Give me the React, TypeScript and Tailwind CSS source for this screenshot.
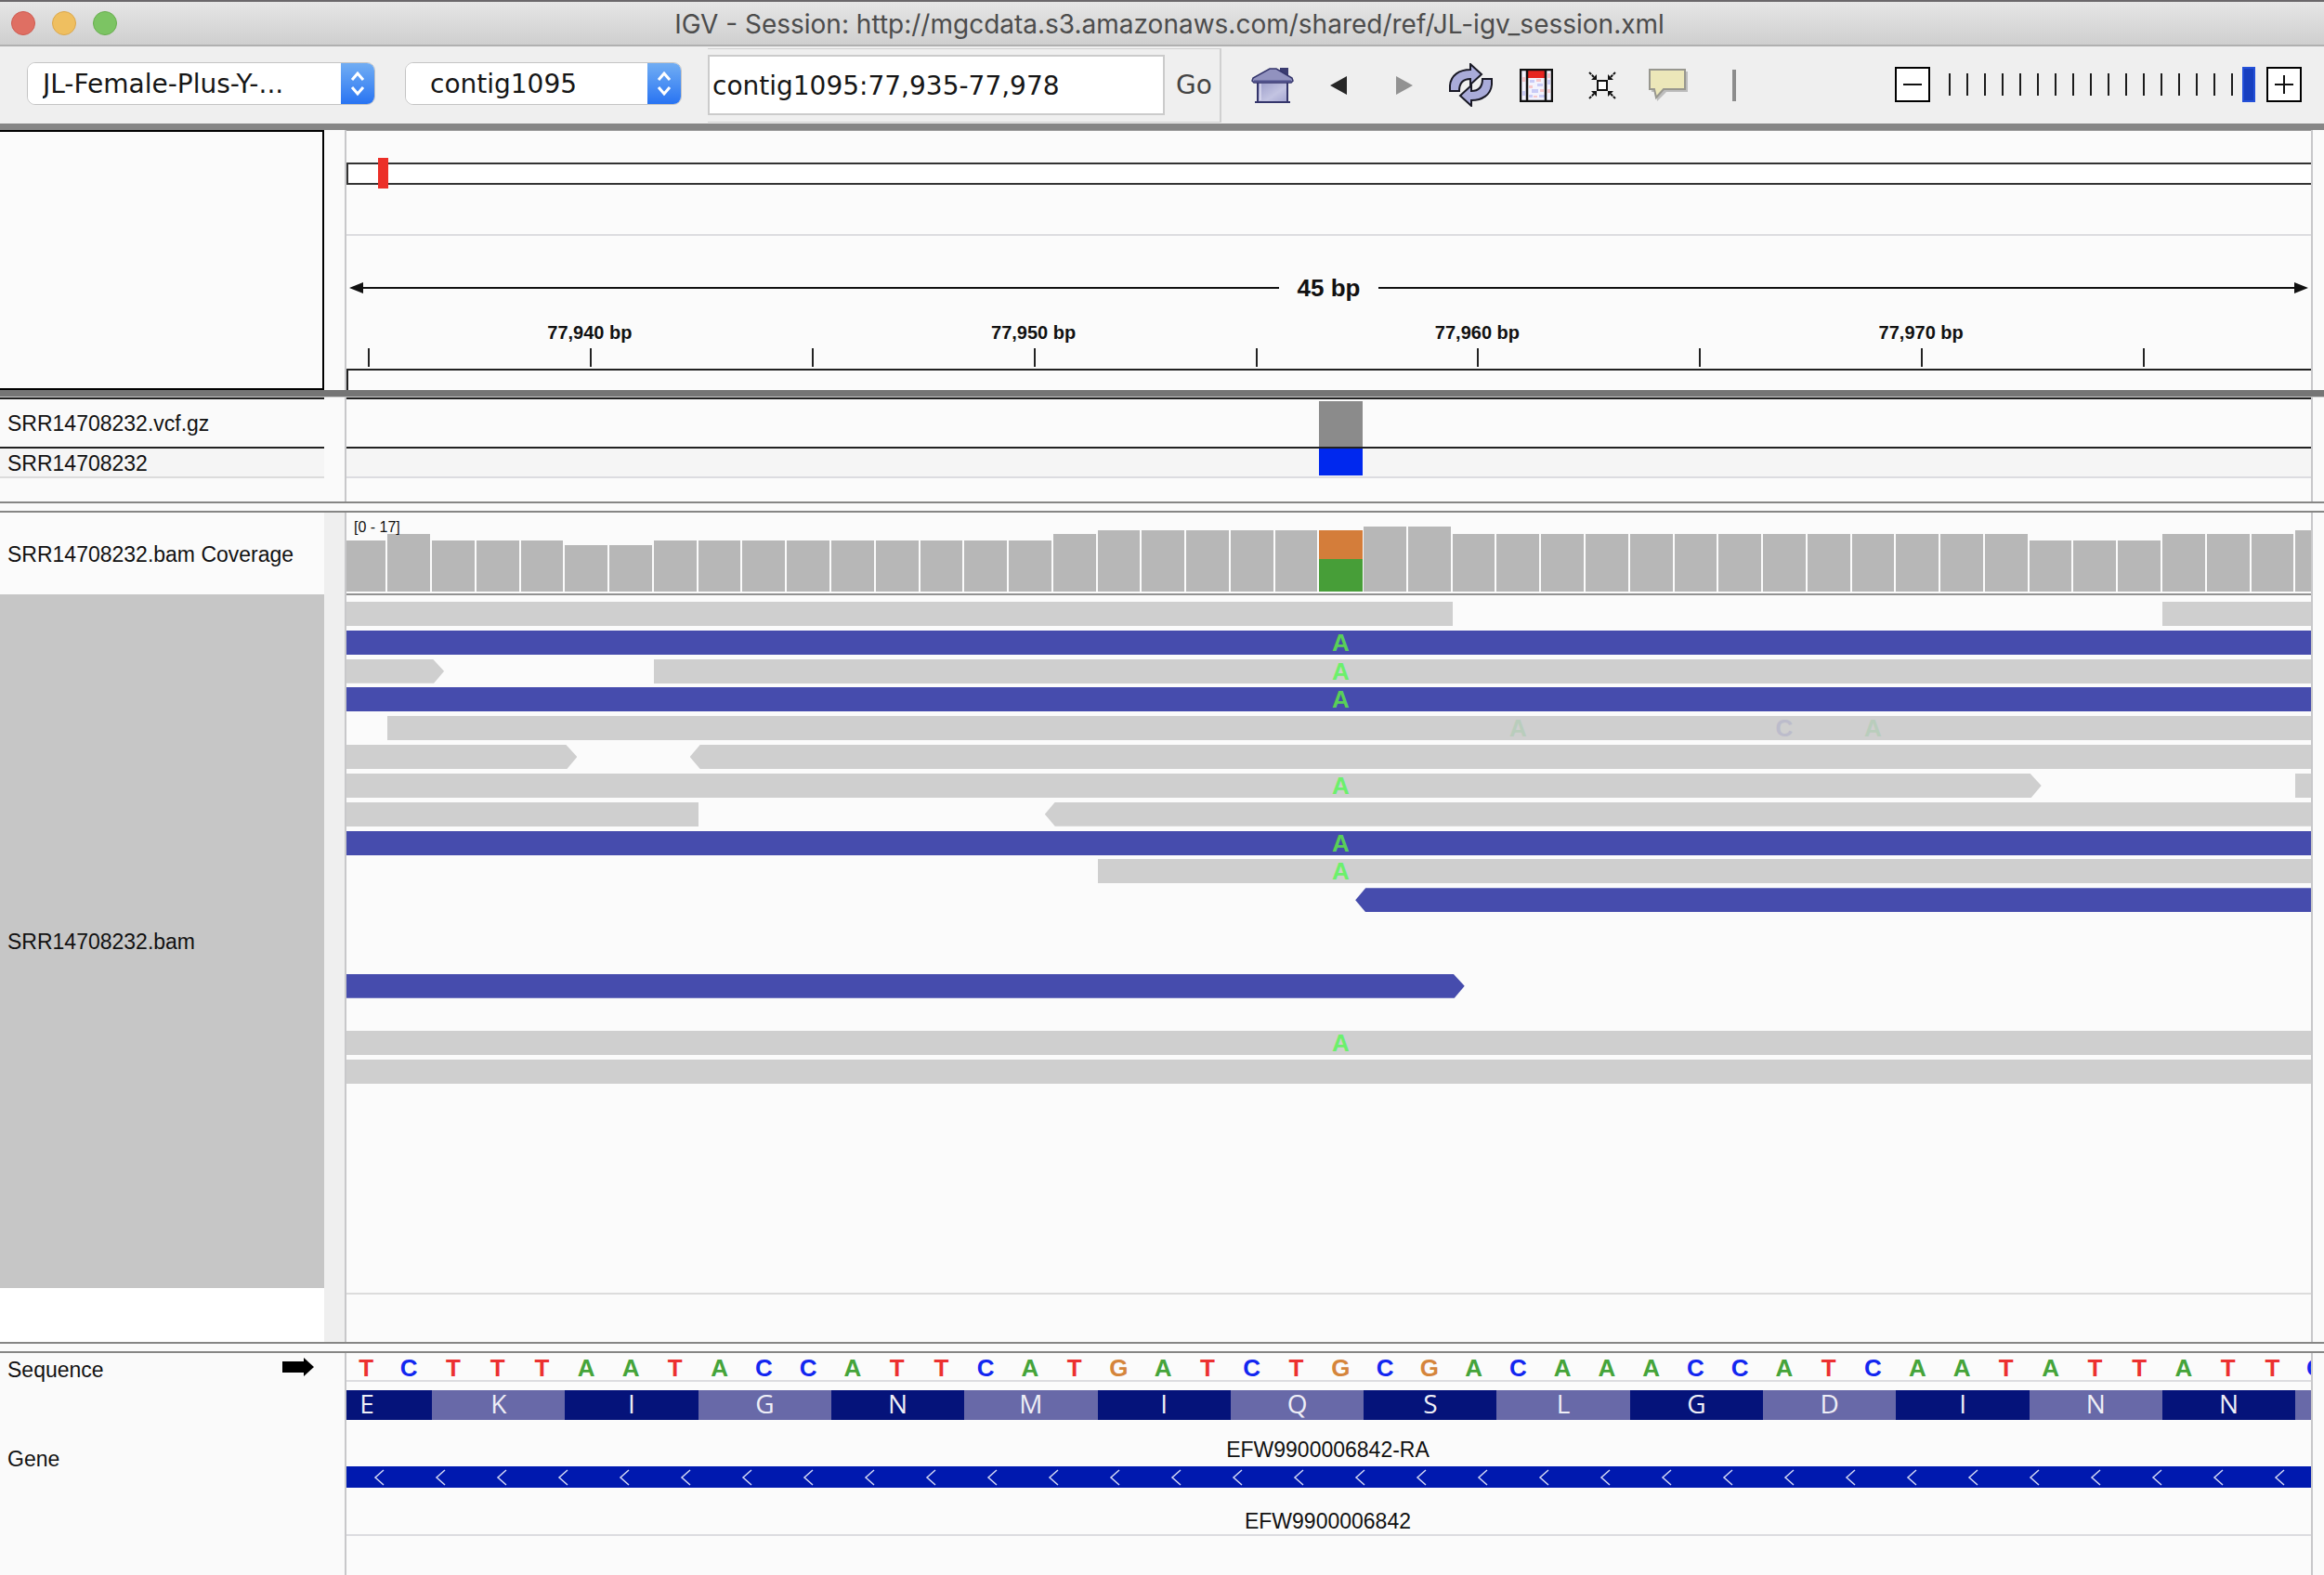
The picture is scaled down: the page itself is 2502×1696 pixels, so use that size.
import type { ReactNode } from 'react'
import clsx from 'clsx'

const SEQUENCE = 'TCTTTAATACCATTCATGATCTGCGACAAACCATCAATATTATTC'

// pixel height of the coverage bar under each base
const COVERAGE = [
  55, 62, 55, 55, 55, 50, 50, 55, 55, 55, 55, 55, 55, 55, 55, 55, 62, 66, 66, 66, 66, 66, 66, 70, 70,
  62, 62, 62, 62, 62, 62, 62, 62, 62, 62, 62, 62, 62, 55, 55, 55, 62, 62, 62, 66,
]

const VARIANT = 22

const BASE_COLORS: Record<string, string> = {
  A: 'text-[#45a43a]',
  C: 'text-[#1226f0]',
  G: 'text-[#d5853b]',
  T: 'text-[#ec3030]',
}

const AMINO_ACIDS = [
  { letter: 'E', span: 'col-[1/3]' },
  { letter: 'K', span: 'col-[3/6]' },
  { letter: 'I', span: 'col-[6/9]' },
  { letter: 'G', span: 'col-[9/12]' },
  { letter: 'N', span: 'col-[12/15]' },
  { letter: 'M', span: 'col-[15/18]' },
  { letter: 'I', span: 'col-[18/21]' },
  { letter: 'Q', span: 'col-[21/24]' },
  { letter: 'S', span: 'col-[24/27]' },
  { letter: 'L', span: 'col-[27/30]' },
  { letter: 'G', span: 'col-[30/33]' },
  { letter: 'D', span: 'col-[33/36]' },
  { letter: 'I', span: 'col-[36/39]' },
  { letter: 'N', span: 'col-[39/42]' },
  { letter: 'N', span: 'col-[42/45]' },
  { letter: '', span: 'col-[45/46]' },
]

type Read = { span: string; blue?: boolean; arrow?: 'left' | 'right' }
type Mismatch = { base: string; at: string; faint?: boolean }
type ReadRow = { reads: Read[]; mismatches?: Mismatch[] }

const SNP: Mismatch = { base: 'A', at: 'col-[23]' }

const READ_ROWS: ReadRow[] = [
  { reads: [{ span: 'col-[1/26]' }, { span: 'col-[42/46]' }] },
  { reads: [{ span: 'col-[1/46]', blue: true }], mismatches: [SNP] },
  { reads: [{ span: 'col-[1/3]', arrow: 'right' }, { span: 'col-[8/46]' }], mismatches: [SNP] },
  { reads: [{ span: 'col-[1/46]', blue: true }], mismatches: [SNP] },
  {
    reads: [{ span: 'col-[2/46]' }],
    mismatches: [
      { base: 'A', at: 'col-[27]', faint: true },
      { base: 'C', at: 'col-[33]', faint: true },
      { base: 'A', at: 'col-[35]', faint: true },
    ],
  },
  { reads: [{ span: 'col-[1/6]', arrow: 'right' }, { span: 'col-[9/46]', arrow: 'left' }] },
  { reads: [{ span: 'col-[1/39]', arrow: 'right' }, { span: 'col-[45/46]' }], mismatches: [SNP] },
  { reads: [{ span: 'col-[1/9]' }, { span: 'col-[17/46]', arrow: 'left' }] },
  { reads: [{ span: 'col-[1/46]', blue: true }], mismatches: [SNP] },
  { reads: [{ span: 'col-[18/46]' }], mismatches: [SNP] },
  { reads: [{ span: 'col-[24/46]', blue: true, arrow: 'left' }] },
  { reads: [] },
  { reads: [] },
  { reads: [{ span: 'col-[1/26]', blue: true, arrow: 'right' }] },
  { reads: [] },
  { reads: [{ span: 'col-[1/46]' }], mismatches: [SNP] },
  { reads: [{ span: 'col-[1/46]' }] },
]

const TICKS = ['', '77,940 bp', '', '77,950 bp', '', '77,960 bp', '', '77,970 bp', '']

// One column per base, the first and the last are cut off by the panel edges
function BaseGrid({ className, children }: { className?: string; children: ReactNode }) {
  return (
    <div
      className={clsx(
        'grid grid-cols-[minmax(0,4430fr)_repeat(43,minmax(0,4775fr))_minmax(0,1670fr)]',
        className,
      )}
    >
      {children}
    </div>
  )
}

function Panel({
  names,
  children,
  gutter = 'bg-[#fafafa]',
  className,
}: {
  names: ReactNode
  children: ReactNode
  gutter?: string
  className?: string
}) {
  return (
    <section className={clsx('flex', className)}>
      <div className="flex w-[349px] shrink-0 flex-col">{names}</div>
      <div className={clsx('w-[22px] shrink-0', gutter)} />
      <div className="flex min-w-0 flex-1 flex-col overflow-hidden border-x-2 border-[#c8c8ca] bg-[#fbfbfb]">
        {children}
      </div>
      <div className="w-3 shrink-0 bg-[#fafafa]" />
    </section>
  )
}

function Divider() {
  return <div className="h-3 border-y-2 border-[#868685] bg-[#fafafa]" />
}

function Dropdown({ label, value, className }: { label: string; value: string; className: string }) {
  return (
    <div className="flex h-[46px] overflow-hidden rounded-[9px] border border-[#c4c4c4] bg-white">
      <select
        aria-label={label}
        className={clsx('h-full appearance-none bg-white pt-0.5 text-[28px] text-[#161616] outline-none', className)}
      >
        <option>{value}</option>
      </select>
      <div className="flex w-9 items-center justify-center bg-linear-to-b from-[#71adf3] to-[#2873f2]">
        <svg className="h-7 w-4" viewBox="0 0 16 28" fill="none" stroke="white" strokeWidth="3">
          <path d="M2 10 8 3l6 7M2 18l6 7 6-7" />
        </svg>
      </div>
    </div>
  )
}

function ToolButton({ label, children }: { label: string; children: ReactNode }) {
  return (
    <button type="button" aria-label={label} className="flex h-14 w-[71px] shrink-0 items-center justify-center">
      {children}
    </button>
  )
}

function HomeIcon() {
  return (
    <svg className="h-[38px] w-[46px]" viewBox="0 0 46 38">
      <defs>
        <linearGradient id="wall" x1="0" y1="0" x2="1" y2="1">
          <stop offset="0" stopColor="#9a9bc8" />
          <stop offset="0.6" stopColor="#c3c4e2" />
          <stop offset="1" stopColor="#a3a4d0" />
        </linearGradient>
      </defs>
      <path d="M31 0h9v11h-9z" fill="#3b3c70" />
      <path d="M7 15h32v22H7z" fill="url(#wall)" stroke="#34356b" strokeWidth="2" />
      <path d="M10 17v18" stroke="#dcdcf0" strokeWidth="1.5" />
      <path d="M20 1h7l17 10 1 3-2 2H3l-2-2 1-3z" fill="#9192bf" stroke="#34356b" strokeWidth="1.5" />
      <path d="M3 14.5h40" stroke="#50518c" strokeWidth="2" />
      <path d="M4 37h38" stroke="#34356b" strokeWidth="2" />
    </svg>
  )
}

function RefreshIcon() {
  const arrow = 'M1 30v-6C2 13 11 7 23 7V1l12 11-12 11v-6c-8 0-12 4-12 13z'
  return (
    <svg className="h-[47px] w-[47px]" viewBox="0 0 47 47" fill="#a9abd9" stroke="#191925" strokeWidth="2">
      <path d={arrow} />
      <path d={arrow} transform="rotate(180 23.5 23.5)" />
    </svg>
  )
}

function RegionIcon() {
  return (
    <svg className="h-9 w-9" viewBox="0 0 36 36">
      <path d="M1 1h34v34H1z" fill="#f3f3fd" />
      <path d="M11 12h5v3h-5zM19 16h6v3h-6zM13 22h7v4h-7zM21 28h6v3h-6zM10 28h4v3h-4zM3 24h3v5H3zM30 12h3v5h-3z" fill="#c9cbf6" />
      <path d="M18 11h5v3h-5zM10 18h4v3h-4zM22 22h4v3h-4zM15 29h4v2h-4zM3 9h3v5H3zM30 5h3v5h-3zM30 22h3v4h-3z" fill="#f7c6ca" />
      <path d="M9 2h18v8H9z" fill="#e8251f" />
      <path d="M1 1h34v34H1zM8 1v34M28 1v34" fill="none" stroke="#101010" strokeWidth="2.5" />
    </svg>
  )
}

function FitIcon() {
  return (
    <svg className="h-[30px] w-[30px]" viewBox="0 0 30 30" fill="none" stroke="#101010">
      <path d="M10 10h10v10H10z" fill="white" strokeWidth="2" />
      <path d="m1 1 5 5M29 1l-5 5M1 29l5-5M29 29l-5-5" strokeWidth="2" strokeDasharray="3 1" />
      <path d="M9 9H3l6-6zM21 9h6l-6-6zM9 21H3l6 6zM21 21h6l-6 6z" fill="#101010" stroke="none" />
    </svg>
  )
}

function NoteIcon() {
  return (
    <svg className="h-9 w-[43px]" viewBox="0 0 43 36">
      <path d="M3 3h39v22H19L9 35 8 25H3z" fill="#bdbdbd" />
      <path d="M1 1h38v21H16L8 31 6 22H1z" fill="#ece7b9" stroke="#98978f" strokeWidth="2" />
    </svg>
  )
}

function Toolbar() {
  return (
    <div className="flex h-[83px] items-center bg-[#efefef] font-['DejaVu_Sans',sans-serif] text-[28px]">
      <div className="flex items-center gap-8 pr-7 pb-1 pl-[29px]">
        <Dropdown label="Genome" value="JL-Female-Plus-Y-..." className="w-[337px] pl-4" />
        <Dropdown label="Chromosome" value="contig1095" className="w-[260px] pl-[26px]" />
      </div>
      <div className="flex h-20 items-center border-y border-r-2 border-[#d0d0d0] pr-2">
        <input
          aria-label="Locus"
          defaultValue="contig1095:77,935-77,978"
          className="h-[65px] w-[492px] border-2 border-[#cbcbcb] bg-white pt-0.5 pl-[3px] text-[#161616] outline-none"
        />
        <button type="button" className="pl-3 text-[#444]">
          Go
        </button>
      </div>
      <div className="flex items-center pl-5">
        <ToolButton label="Home">
          <HomeIcon />
        </ToolButton>
        <ToolButton label="Back">
          <svg className="h-5 w-[18px]" viewBox="0 0 18 20">
            <path d="M18 0v20L0 10z" fill="#262626" />
          </svg>
        </ToolButton>
        <ToolButton label="Forward">
          <svg className="h-5 w-[18px]" viewBox="0 0 18 20">
            <path d="M0 0v20l18-10z" fill="#929292" />
          </svg>
        </ToolButton>
        <ToolButton label="Refresh">
          <RefreshIcon />
        </ToolButton>
        <ToolButton label="Region of interest">
          <RegionIcon />
        </ToolButton>
        <ToolButton label="Fit to window">
          <FitIcon />
        </ToolButton>
        <ToolButton label="Popup text">
          <NoteIcon />
        </ToolButton>
        <ToolButton label="Ruler line">
          <span className="h-[34px] w-1 bg-[#8c8c8c]" />
        </ToolButton>
      </div>
      <ZoomControl />
    </div>
  )
}

function ZoomControl() {
  return (
    <div className="ml-auto flex items-center pr-6 pb-0.5">
      <button type="button" aria-label="Zoom out" className="h-[38px] w-[38px] border-2 border-black bg-white">
        <svg viewBox="0 0 34 34" stroke="#111" strokeWidth="2">
          <path d="M7 17h20" />
        </svg>
      </button>
      <div className="ml-5 grid w-[330px] items-center">
        <div className="col-start-1 row-start-1 mr-6 flex justify-between">
          {Array.from({ length: 17 }, (_, i) => (
            <span key={i} className="h-6 w-[2px] bg-[#1c1c1c]" />
          ))}
        </div>
        <input
          type="range"
          aria-label="Zoom level"
          min={0}
          max={17}
          defaultValue={17}
          className="col-start-1 row-start-1 h-[38px] w-full appearance-none bg-transparent [&::-webkit-slider-thumb]:h-[38px] [&::-webkit-slider-thumb]:w-[14px] [&::-webkit-slider-thumb]:appearance-none [&::-webkit-slider-thumb]:border-2 [&::-webkit-slider-thumb]:border-[#2450d8] [&::-webkit-slider-thumb]:bg-[#173fc0]"
        />
      </div>
      <button type="button" aria-label="Zoom in" className="ml-3 h-[38px] w-[38px] border-2 border-black bg-white">
        <svg viewBox="0 0 34 34" stroke="#111" strokeWidth="2">
          <path d="M7 17h20M17 7v20" />
        </svg>
      </button>
    </div>
  )
}

function Ruler() {
  return (
    <>
      <div className="flex h-[114px] flex-col border-t border-b-2 border-t-[#9a9a9a] border-b-[#dcdce0] pt-[34px]">
        <div className="relative h-6 border-y-2 border-l-2 border-[#333] bg-white">
          <div className="absolute -top-[7px] left-[1.5%] h-[33px] w-[11px] bg-[#ec2f28]" />
        </div>
      </div>
      <div className="mt-10 flex h-8 items-center px-[3px]">
        <svg className="h-3 w-5" viewBox="0 0 20 12">
          <path d="M0 6 15 0v5h5v2h-5v5z" fill="#111" />
        </svg>
        <div className="h-[2px] flex-1 bg-[#111]" />
        <span className="px-5 text-[26px] leading-8 font-bold">45 bp</span>
        <div className="h-[2px] flex-1 bg-[#111]" />
        <svg className="h-3 w-5" viewBox="0 0 20 12">
          <path d="M20 6 5 0v5H0v2h5v5z" fill="#111" />
        </svg>
      </div>
      <div className="mt-5 grid grid-cols-[minmax(0,23fr)_repeat(8,minmax(0,239fr))_minmax(0,181fr)]">
        <span />
        {TICKS.map((label, i) => (
          <div key={i}>
            <div className="h-6 w-fit -translate-x-1/2 text-xl leading-6 font-bold whitespace-nowrap">{label}</div>
            <div className="mt-[5px] h-5 w-[2px] bg-[#222]" />
          </div>
        ))}
      </div>
      <div className="mt-0.5 h-[23px] border-t-2 border-l-2 border-[#222]" />
    </>
  )
}

function Coverage() {
  return (
    <div className="relative border-b-2 border-[#929292]">
      <BaseGrid className="h-[87px] items-end pb-0.5">
        {COVERAGE.map((h, i) =>
          i === VARIANT ? (
            <div key={i} className="mr-px">
              <div className="h-[31px] bg-[#d47d3a]" />
              <div className="h-[35px] bg-[#479e38]" />
            </div>
          ) : (
            <div
              key={i}
              className={clsx('bg-[#b7b7b7]', i < COVERAGE.length - 1 && 'mr-0.5')}
              style={{ height: h }}
            />
          ),
        )}
      </BaseGrid>
      <span className="absolute top-2 left-2 text-base leading-4">[0 - 17]</span>
    </div>
  )
}

function Alignments() {
  return (
    <div className="h-[753px] border-b-2 border-[#dcdcdc] pt-[7px]">
      <div className="grid h-[524px] grid-rows-[repeat(17,minmax(0,1fr))]">
        {READ_ROWS.map((row, i) => (
          <BaseGrid key={i} className="items-start">
            {row.reads.map((read) => (
              <div
                key={read.span}
                className={clsx(
                  'row-start-1 h-[26px]',
                  read.span,
                  read.blue ? 'bg-[#464cad]' : 'bg-[#cfcfcf]',
                  read.arrow === 'right' &&
                    '-mr-[13px] [clip-path:polygon(0_0,calc(100%-12px)_0,100%_50%,calc(100%-11px)_100%,0_100%)]',
                  read.arrow === 'left' && '-ml-[9px] [clip-path:polygon(11px_0,100%_0,100%_100%,11px_100%,0_50%)]',
                )}
              />
            ))}
            {/* z-10 keeps the letters above the clipped reads */}
            {row.mismatches?.map((m) => (
              <span
                key={m.at}
                className={clsx(
                  'z-10 row-start-1 pr-0.5 text-center text-[26px] leading-[26px] font-bold',
                  m.at,
                  m.faint
                    ? m.base === 'A'
                      ? 'text-[#b9cdbc]'
                      : 'text-[#bcbccb]'
                    : row.reads[0].blue
                      ? 'text-[#59cf58]'
                      : 'text-[#6cf06c]',
                )}
              >
                {m.base}
              </span>
            ))}
          </BaseGrid>
        ))}
      </div>
    </div>
  )
}

function Gene() {
  return (
    <div className="flex h-[125px] flex-col border-b-2 border-[#dcdce0] text-center text-[23px] leading-6">
      <div className="pt-5 pr-0.5 pb-1.5">EFW9900006842-RA</div>
      <svg className="h-[23px] w-full shrink-0 bg-[#0019af]">
        <pattern id="strand" width="66" height="23" patternUnits="userSpaceOnUse">
          <path d="m40 4-9 8 9 8" fill="none" stroke="#d5d9f5" strokeWidth="1.5" />
        </pattern>
        <rect width="100%" height="100%" fill="url(#strand)" />
      </svg>
      <div className="pt-6 pr-0.5">EFW9900006842</div>
    </div>
  )
}

export default function App() {
  return (
    <div className="flex min-h-screen flex-col bg-[#fafafa] font-['Liberation_Sans',Arial,sans-serif] text-[#111]">
      <header className="flex h-[50px] items-center border-t-2 border-b-2 border-t-[#6b686b] border-b-[#b0b0b0] bg-linear-to-b from-[#e6e6e6] to-[#cfcfcf] px-3">
        <div className="flex flex-1 gap-[18px]">
          <span className="h-[26px] w-[26px] rounded-full border border-[#cf5a50] bg-[#df6f63]" />
          <span className="h-[26px] w-[26px] rounded-full border border-[#dba74b] bg-[#efbf60]" />
          <span className="h-[26px] w-[26px] rounded-full border border-[#68ae4e] bg-[#7cc463]" />
        </div>
        <h1 className="pt-0.5 pl-4 font-[Inter,sans-serif] text-[28px] whitespace-nowrap text-[#4c4c4c]">
          IGV - Session: http://mgcdata.s3.amazonaws.com/shared/ref/JL-igv_session.xml
        </h1>
        <div className="flex-1" />
      </header>
      <Toolbar />
      <div className="h-[7px] bg-[#868686]" />

      <Panel names={<div className="flex-1 border-2 border-l-0 border-black bg-[#fbfbfb]" />} className="h-[280px]">
        <Ruler />
      </Panel>
      <div className="h-2 border-b border-[#c8c8c8] bg-[#757575]" />

      <Panel
        className="h-28"
        names={
          <div className="text-[23px]">
            <div className="flex h-[53px] items-center border-t-2 border-[#222] pt-0.5 pl-2">SRR14708232.vcf.gz</div>
            <div className="flex h-[34px] items-center border-t-2 border-b-2 border-t-[#222] border-b-[#dcdcdc] bg-[#f5f5f5] pt-0.5 pl-2">
              SRR14708232
            </div>
          </div>
        }
      >
        <BaseGrid className="h-[53px] border-t-2 border-[#222] pt-0.5">
          <div className="col-[23] mr-px bg-[#8b8b8b]" />
        </BaseGrid>
        <BaseGrid className="h-[34px] border-t-2 border-b-2 border-t-[#222] border-b-[#dcdce0] bg-[#f5f5f5] pb-px">
          <div className="col-[23] mr-px bg-[#0028ee]" />
        </BaseGrid>
      </Panel>
      <Divider />

      <Panel
        className="h-[893px]"
        gutter="bg-[#efefef]"
        names={
          <div className="flex flex-1 flex-col bg-white text-[23px]">
            <div className="flex h-[88px] items-center bg-[#fbfbfb] pt-0.5 pl-2">SRR14708232.bam Coverage</div>
            <div className="flex h-[747px] items-center bg-[#c6c6c6] pt-0.5 pl-2">SRR14708232.bam</div>
          </div>
        }
      >
        <Coverage />
        <Alignments />
      </Panel>
      <Divider />

      <Panel
        className="flex-1"
        names={
          <div className="pl-2 text-[23px] leading-8">
            <div className="flex h-[98px] items-start justify-between pt-0.5 pr-[11px]">
              Sequence
              <svg className="mt-[3px] h-5 w-[34px]" viewBox="0 0 34 20">
                <path d="M0 4h23V0l11 10-11 10v-4H0z" />
              </svg>
            </div>
            <div>Gene</div>
          </div>
        }
      >
        <BaseGrid className="h-[31px] border-b-2 border-[#dcdce0] pt-[3px]">
          {SEQUENCE.split('').map((base, i) => (
            <span key={i} className={clsx('text-[26px] leading-[26px] font-bold', BASE_COLORS[base])}>
              <span className={clsx('block pr-0.5 text-center', i === 44 && 'w-11')}>{base}</span>
            </span>
          ))}
        </BaseGrid>
        <BaseGrid className="mt-[9px] h-8 font-['Open_Sans',sans-serif]">
          {AMINO_ACIDS.map((aa, i) => (
            <span
              key={i}
              className={clsx(
                'text-center text-[28px] leading-7 text-[#eeeef6]',
                aa.span,
                i === 0 && 'pr-12',
                i % 2 ? 'bg-[#6869a8]' : 'bg-[#05137a]',
              )}
            >
              {aa.letter}
            </span>
          ))}
        </BaseGrid>
        <Gene />
      </Panel>
    </div>
  )
}
